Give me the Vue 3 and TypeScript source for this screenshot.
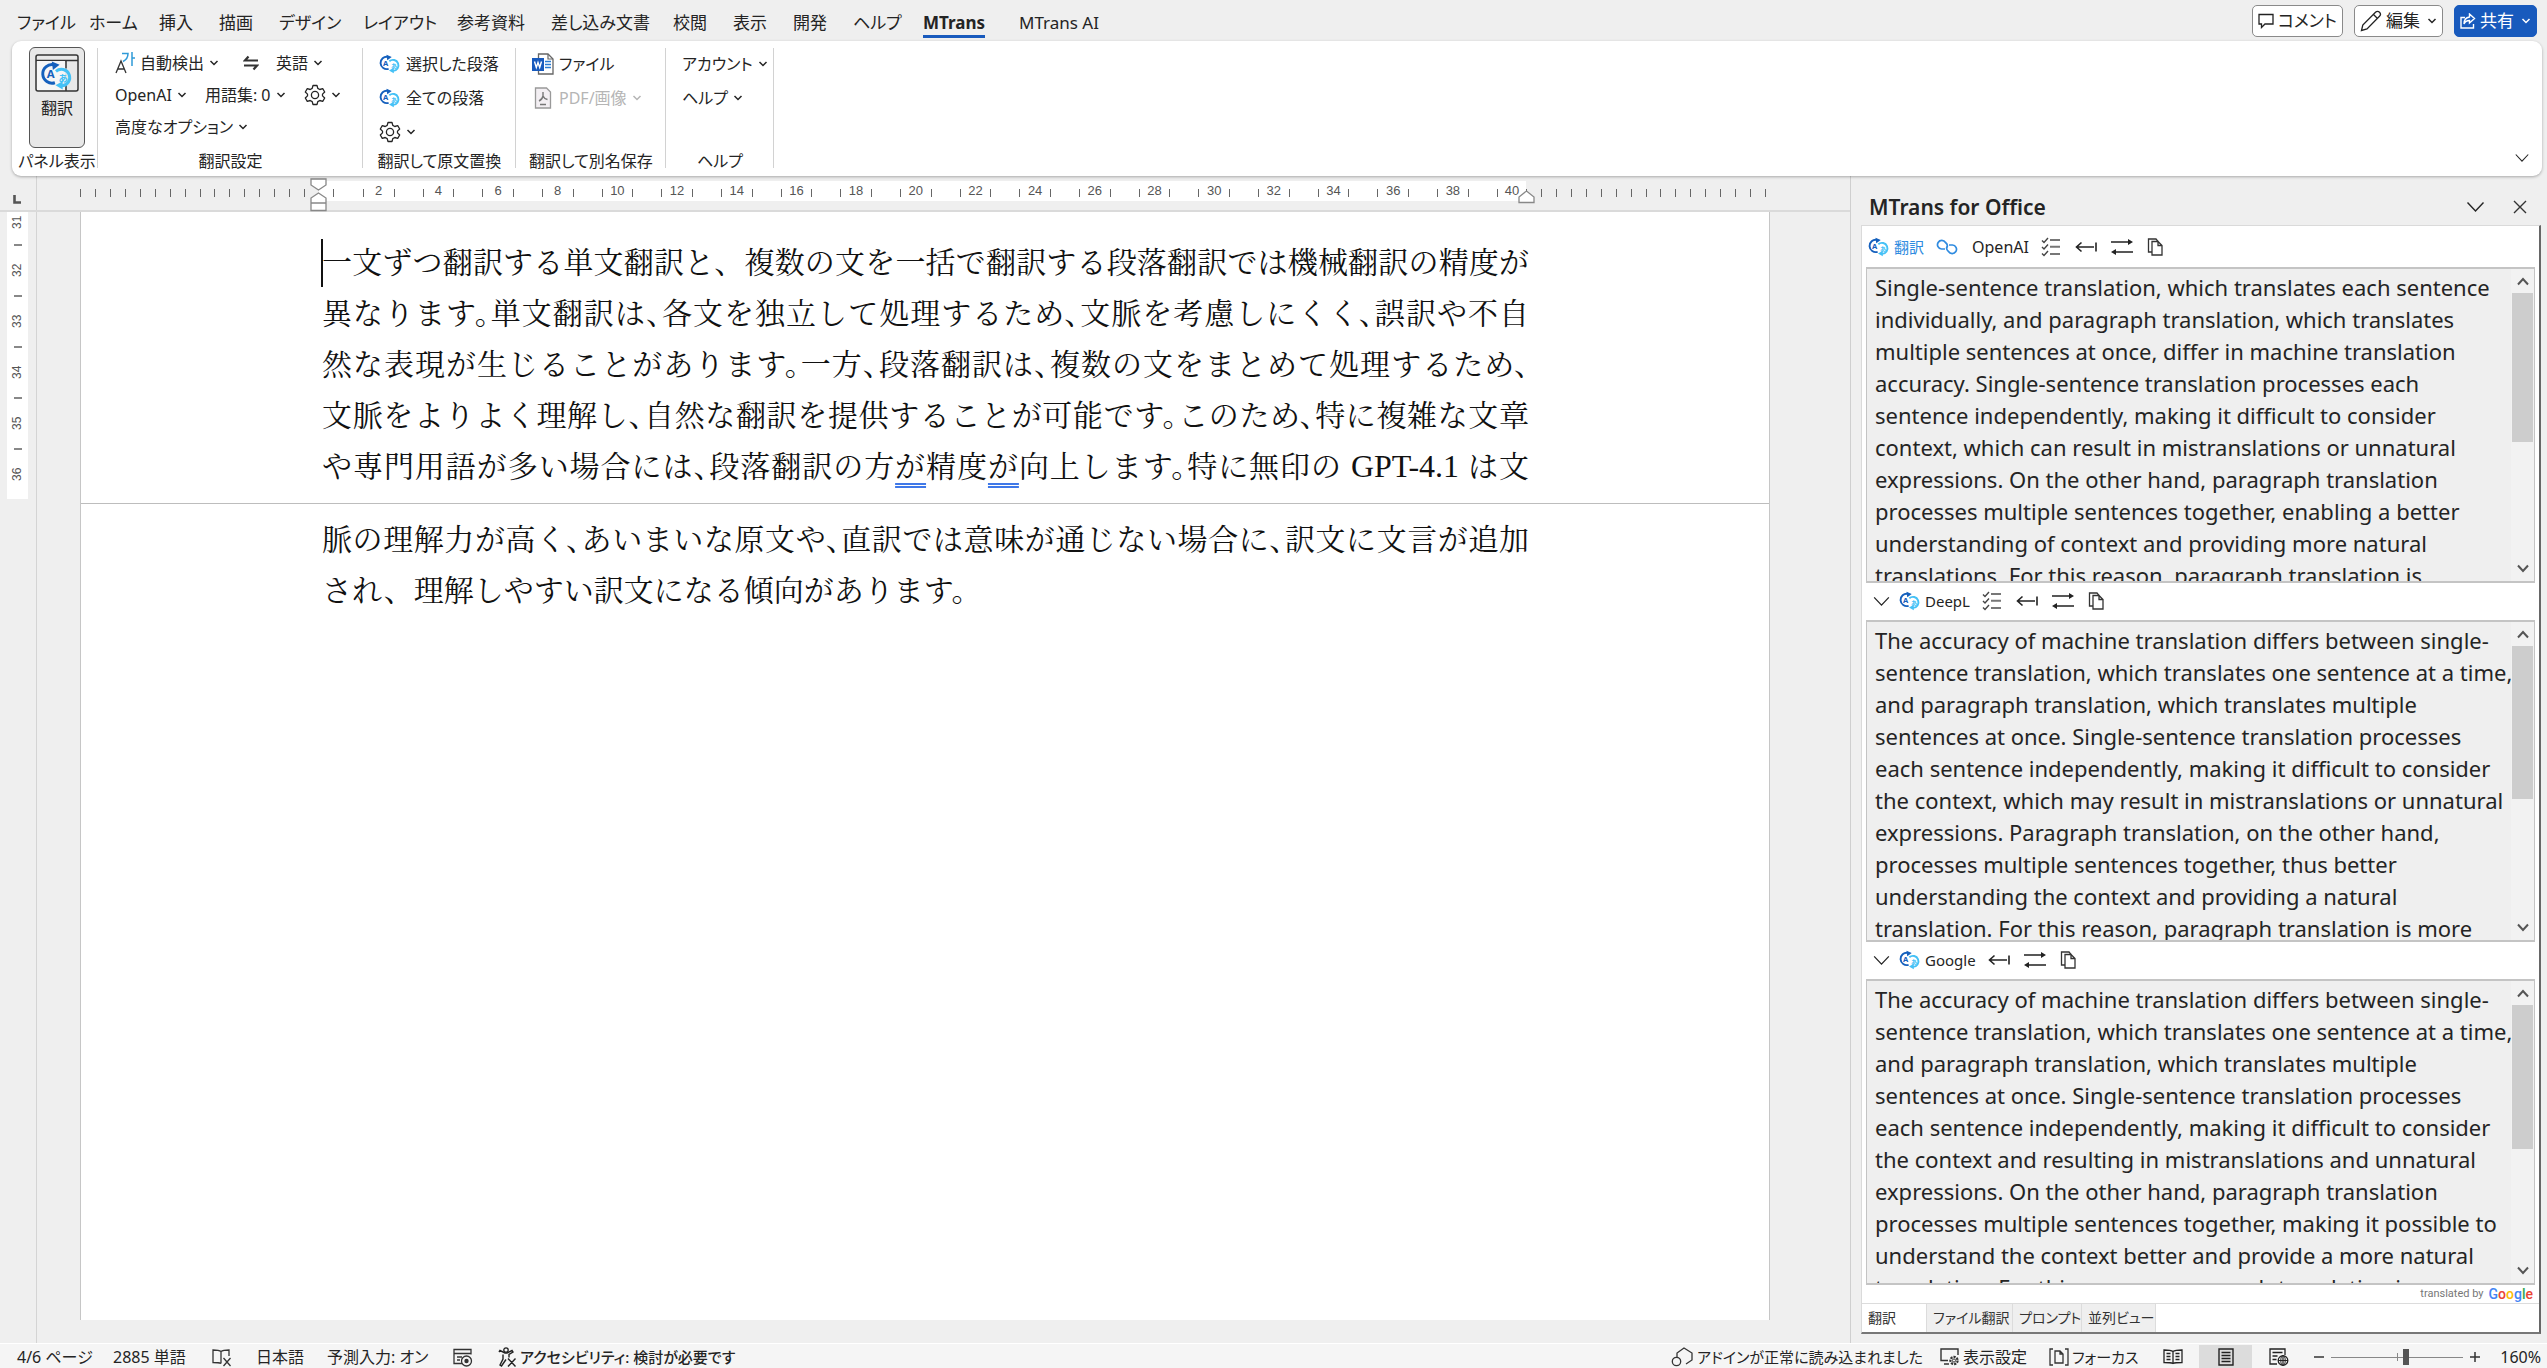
<script setup lang="ts">
import { ref } from 'vue'

interface Tab { label: string; width: number; active?: boolean }
interface Engine {
  name: string
  grow: number
  thumb: number
  first?: boolean
  checklist: boolean
  text: string
}

const tabs: Tab[] = [
  { label: 'ファイル', width: 72 },
  { label: 'ホーム', width: 70 },
  { label: '挿入', width: 60 },
  { label: '描画', width: 60 },
  { label: 'デザイン', width: 84 },
  { label: 'レイアウト', width: 94 },
  { label: '参考資料', width: 94 },
  { label: '差し込み文書', width: 122 },
  { label: '校閲', width: 60 },
  { label: '表示', width: 60 },
  { label: '開発', width: 60 },
  { label: 'ヘルプ', width: 70 },
  { label: 'MTrans', width: 96, active: true },
  { label: 'MTrans AI', width: 96 },
]

const rulerNumbers = Array.from({ length: 20 }, (_, i) => (i + 1) * 2)
const verticalNumbers = [31, 32, 33, 34, 35, 36]

const engines: Engine[] = [
  {
    name: 'OpenAI',
    grow: 316,
    thumb: 149,
    first: true,
    checklist: true,
    text: `Single-sentence translation, which translates each sentence
individually, and paragraph translation, which translates
multiple sentences at once, differ in machine translation
accuracy. Single-sentence translation processes each
sentence independently, making it difficult to consider
context, which can result in mistranslations or unnatural
expressions. On the other hand, paragraph translation
processes multiple sentences together, enabling a better
understanding of context and providing more natural
translations. For this reason, paragraph translation is`,
  },
  {
    name: 'DeepL',
    grow: 322,
    thumb: 153,
    checklist: true,
    text: `The accuracy of machine translation differs between single-
sentence translation, which translates one sentence at a time,
and paragraph translation, which translates multiple
sentences at once. Single-sentence translation processes
each sentence independently, making it difficult to consider
the context, which may result in mistranslations or unnatural
expressions. Paragraph translation, on the other hand,
processes multiple sentences together, thus better
understanding the context and providing a natural
translation. For this reason, paragraph translation is more`,
  },
  {
    name: 'Google',
    grow: 306,
    thumb: 144,
    checklist: false,
    text: `The accuracy of machine translation differs between single-
sentence translation, which translates one sentence at a time,
and paragraph translation, which translates multiple
sentences at once. Single-sentence translation processes
each sentence independently, making it difficult to consider
the context and resulting in mistranslations and unnatural
expressions. On the other hand, paragraph translation
processes multiple sentences together, making it possible to
understand the context better and provide a more natural
translation. For this reason, paragraph translation is`,
  },
]

const paneTabs: Tab[] = [
  { label: '翻訳', width: 65, active: true },
  { label: 'ファイル翻訳', width: 86 },
  { label: 'プロンプト', width: 69 },
  { label: '並列ビュー', width: 74 },
]

const googleLetters = [
  { ch: 'G', color: '#4285f4' },
  { ch: 'o', color: '#ea4335' },
  { ch: 'o', color: '#fbbc05' },
  { ch: 'g', color: '#4285f4' },
  { ch: 'l', color: '#34a853' },
  { ch: 'e', color: '#ea4335' },
]

const zoom = ref(57)
</script>

<template>
  <div class="word">
    <svg class="defs" aria-hidden="true">
      <symbol id="logo" viewBox="0 0 32 28">
        <path d="M13 3.6A9 9 0 1 0 14 21" fill="none" stroke="#1560bd" stroke-width="2.8" />
        <path d="M11 0.5l7.5 3.2L12 8.6z" fill="#1560bd" />
        <path d="M15 10a8 8 0 1 1 5.5 14" fill="none" stroke="#45c1f6" stroke-width="2.8" />
        <path d="M21.5 19.5v8l-7-4z" fill="#45c1f6" />
        <text x="9.8" y="16.5" font-size="11" font-weight="700" text-anchor="middle" fill="#1560bd">A</text>
        <text x="22" y="20" font-size="9" font-weight="700" text-anchor="middle" fill="#45c1f6">あ</text>
      </symbol>
      <symbol id="chev" viewBox="0 0 10 6">
        <path d="M1.5 1l3.5 3.5L8.5 1" fill="none" stroke="currentColor" stroke-width="1.5" />
      </symbol>
      <symbol id="bigchev" viewBox="0 0 18 12">
        <path d="M1 1.5l8 8.5 8-8.5" fill="none" stroke="currentColor" stroke-width="1.4" />
      </symbol>
      <symbol id="gear" viewBox="0 0 22 22">
        <path d="M9 1.5h4l.8 2.9 2 1.1 2.9-.8 2 3.3-2.2 2.1v1.8l2.2 2.1-2 3.3-2.9-.8-2 1.1-.8 2.9H9l-.8-2.9-2-1.1-2.9.8-2-3.3 2.2-2.1v-1.8L1.3 8l2-3.3 2.9.8 2-1.1z" fill="none" stroke="currentColor" stroke-width="1.3" stroke-linejoin="round" />
        <circle cx="11" cy="11" r="3.6" fill="none" stroke="currentColor" stroke-width="1.3" />
      </symbol>
      <symbol id="checklist" viewBox="0 0 20 20">
        <path d="M1 3.5l2 2L7 1M1 10l2 2 4-4.5M1 16.5l2 2L7 14" fill="none" stroke="#444" stroke-width="1.4" />
        <path d="M9 3h10M9 9.8h10M9 17h10" stroke="#777" stroke-width="2" />
      </symbol>
      <symbol id="insert" viewBox="0 0 22 16">
        <path d="M1.5 8H19M6.5 3.5L1.5 8l5 4.5M21 3.5v9" fill="none" stroke="#222" stroke-width="1.6" />
      </symbol>
      <symbol id="exchange" viewBox="0 0 22 18">
        <path d="M0 4h18M4 14h18" stroke="#222" stroke-width="1.6" />
        <path d="M17 1l5 3-5 3zM5 11l-5 3 5 3z" fill="#222" />
      </symbol>
      <symbol id="copy" viewBox="0 0 16 18">
        <path d="M5 3.5h6l4 4V17H5zM11 3.5v4h4" fill="none" stroke="#333" stroke-width="1.3" />
        <path d="M5 14H1.5V1H9l2 2.5" fill="none" stroke="#333" stroke-width="1.3" />
      </symbol>
      <symbol id="link" viewBox="0 0 22 16">
        <path d="M9 10H5.500A4.300 4.300 0 1 1 9.500 3.500c1.600 1.200 2.300 3 1.500 5" fill="none" stroke="#2f8be0" stroke-width="1.7" />
        <path d="M13 6h3.500A4.300 4.300 0 1 1 12.500 12.500c-1.600-1.200-2.300-3-1.500-5" fill="none" stroke="#2f8be0" stroke-width="1.7" />
      </symbol>
    </svg>

    <header class="tabbar">
      <nav class="tabs" aria-label="リボン">
        <button v-for="t in tabs" :key="t.label" class="tab" :class="{ active: t.active }" :style="{ width: t.width + 'px' }">
          <span>{{ t.label }}</span>
        </button>
      </nav>
      <div class="actions">
        <button class="action">
          <svg width="16" height="16" viewBox="0 0 16 16"><path d="M1 1.5h14v9.5H7L3.5 14.5V11H1z" fill="none" stroke="#222" stroke-width="1.3" /></svg>
          コメント
        </button>
        <button class="action">
          <svg width="22" height="22" viewBox="0 0 22 22"><path d="M1.5 20.5l1.3-5.5L15.5 2.3a2.5 2.5 0 0 1 4 4L7 19zM13.5 4.5l4 4" fill="none" stroke="#222" stroke-width="1.3" /></svg>
          編集
          <svg class="chev"><use href="#chev" /></svg>
        </button>
        <button class="action share">
          <svg width="16" height="16" viewBox="0 0 16 16"><path d="M5 4.5H1v10.5h12.5v-4M9.5 1l5 4.5-5 4.5V7.5C7 7.5 5 8.5 4 11c0-4 2-6.5 5.5-7z" fill="none" stroke="#fff" stroke-width="1.4" /></svg>
          共有
          <svg class="chev"><use href="#chev" /></svg>
        </button>
      </div>
    </header>

    <section class="ribbon" aria-label="MTrans">
      <div class="group panel-group">
        <div class="rows">
          <button class="panel-button">
            <svg width="44" height="38" viewBox="0 0 44 38">
              <rect x="1" y="1" width="42" height="36" rx="2" fill="none" stroke="#333" stroke-width="1.5" />
              <path d="M1 6.5h42M31 6.5v8M31 31v6" stroke="#333" stroke-width="1.5" />
              <rect x="2" y="7" width="28" height="29" fill="#f6f6f6" />
              <use href="#logo" x="5" y="7" width="34" height="29" />
            </svg>
            翻訳
          </button>
        </div>
        <h2>パネル表示</h2>
      </div>
      <div class="group settings-group">
        <div class="rows">
          <div class="row">
            <button class="cmd source">
              <svg width="20" height="22" viewBox="0 0 20 22"><path d="M1 21L6 9l5 12M3 17h6" fill="none" stroke="#333" stroke-width="1.3" /><path d="M7 1.5h6c0 4-2 6.5-5 8M17 0v14M17 6h3" fill="none" stroke="#2f9ad8" stroke-width="1.5" /></svg>
              <span>自動検出</span> <svg class="chev"><use href="#chev" /></svg>
            </button>
            <button class="cmd swap" aria-label="入れ替え">
              <svg width="16" height="16" viewBox="0 0 16 16"><path d="M5.5 1.5L2 5.5h13M10.5 14.5L14 10.5H1" fill="none" stroke="#333" stroke-width="2.2" /></svg>
            </button>
            <button class="cmd">英語 <svg class="chev"><use href="#chev" /></svg></button>
          </div>
          <div class="row wide">
            <button class="cmd">OpenAI <svg class="chev"><use href="#chev" /></svg></button>
            <button class="cmd">用語集: 0 <svg class="chev"><use href="#chev" /></svg></button>
            <button class="cmd" aria-label="設定"><svg width="22" height="22"><use href="#gear" /></svg> <svg class="chev"><use href="#chev" /></svg></button>
          </div>
          <div class="row">
            <button class="cmd">高度なオプション <svg class="chev"><use href="#chev" /></svg></button>
          </div>
        </div>
        <h2>翻訳設定</h2>
      </div>
      <div class="group replace-group tall">
        <div class="rows">
          <div class="row"><button class="cmd"><svg class="logo"><use href="#logo" /></svg>選択した段落</button></div>
          <div class="row"><button class="cmd"><svg class="logo"><use href="#logo" /></svg>全ての段落</button></div>
          <div class="row"><button class="cmd" aria-label="設定"><svg width="22" height="22"><use href="#gear" /></svg> <svg class="chev"><use href="#chev" /></svg></button></div>
        </div>
        <h2>翻訳して原文置換</h2>
      </div>
      <div class="group save-group tall">
        <div class="rows">
          <div class="row">
            <button class="cmd">
              <svg width="22" height="22" viewBox="0 0 22 22"><path d="M6.5 1h9.5l5 5v15H6.5z" fill="#fff" stroke="#666" stroke-width="1.3" /><path d="M16 1v5h5" fill="none" stroke="#666" stroke-width="1.2" /><path d="M13 8.5h6M13 11.5h6M13 14.5h6" stroke="#2b7cd3" stroke-width="1.4" /><rect y="5" width="12" height="13" fill="#185abd" /><path d="M2.5 8.5l1.8 6L6 9.5l1.7 5 1.8-6" fill="none" stroke="#fff" stroke-width="1.4" /></svg>
              ファイル
            </button>
          </div>
          <div class="row">
            <button class="cmd" disabled>
              <svg width="22" height="22" viewBox="0 0 22 22"><path d="M3.5 1h11l4 4v16h-15z" fill="#f3eff3" stroke="#999" stroke-width="1.3" /><path d="M11 5v4c-.5 2.5-2 4-4 5M11 9c.8 2 2 3 4.5 3.5M8 17.5h6" fill="none" stroke="#777" stroke-width="1.4" /></svg>
              PDF/画像 <svg class="chev"><use href="#chev" /></svg>
            </button>
          </div>
        </div>
        <h2>翻訳して別名保存</h2>
      </div>
      <div class="group help-group tall">
        <div class="rows">
          <div class="row"><button class="cmd">アカウント <svg class="chev"><use href="#chev" /></svg></button></div>
          <div class="row"><button class="cmd">ヘルプ <svg class="chev"><use href="#chev" /></svg></button></div>
        </div>
        <h2>ヘルプ</h2>
      </div>
      <button class="collapse" aria-label="リボンを折りたたむ"><svg width="14" height="10"><use href="#bigchev" /></svg></button>
    </section>

    <main class="workspace">
      <section class="editor">
        <div class="ruler">
          <div class="corner"><svg width="8" height="9" viewBox="0 0 8 9"><path d="M1.5 0v7.5H8" fill="none" stroke="#555" stroke-width="2.6" /></svg></div>
          <div class="scale">
            <div class="ticks before"><i v-for="n in 16" :key="n" /></div>
            <div class="numbers">
              <span class="cell half"><i /></span>
              <span v-for="n in rulerNumbers" :key="n" class="cell" :class="{ last: n === 40 }"><i />{{ n }}<i v-if="n !== 40" /></span>
              <svg class="indent left" width="17" height="34" viewBox="0 0 17 34"><path d="M1 1h15v6l-7.5 5L1 7zM1 32.5h15V20l-7.5-5L1 20zM1 25h15" fill="#fff" stroke="#888" stroke-width="1.3" /></svg>
              <svg class="indent right" width="17" height="14" viewBox="0 0 17 14"><path d="M1 12.5h15V7L8.5 1 1 7z" fill="#fff" stroke="#888" stroke-width="1.3" /></svg>
            </div>
            <div class="ticks after"><i v-for="n in 17" :key="n" /></div>
          </div>
        </div>
        <div class="canvas">
          <div class="vruler">
            <div class="vscale">
              <template v-for="n in verticalNumbers" :key="n">
                <span class="vnum">{{ n }}</span>
                <i v-if="n !== 36" />
              </template>
            </div>
          </div>
          <article class="page">
            <div class="sheet upper">
              <p>
                <span class="caret">一文ずつ翻訳する単文翻訳と、複数の文を一括で翻訳する段落翻訳では機械翻訳の精度が</span>
                <span class="tight">異なります。単文翻訳は、各文を独立して処理するため、文脈を考慮しにくく、誤訳や不自</span>
                <span class="tight">然な表現が生じることがあります。一方、段落翻訳は、複数の文をまとめて処理するため、</span>
                <span class="tight">文脈をよりよく理解し、自然な翻訳を提供することが可能です。このため、特に複雑な文章</span>
                <span class="tight">や専門用語が多い場合には、段落翻訳の方<u>が</u>精度<u>が</u>向上します。特に無印の<b class="latin"> GPT-4.1 </b>は文</span>
              </p>
            </div>
            <div class="sheet lower">
              <p>
                <span class="tight">脈の理解力が高く、あいまいな原文や、直訳では意味が通じない場合に、訳文に文言が追加</span>
                <span class="end">され、理解しやすい訳文になる傾向があります。</span>
              </p>
            </div>
          </article>
        </div>
      </section>

      <aside class="pane">
        <div class="pane-title">
          <h1>MTrans for Office</h1>
          <button aria-label="メニュー"><svg width="19" height="12"><use href="#bigchev" /></svg></button>
          <button aria-label="閉じる"><svg width="14" height="14" viewBox="0 0 14 14"><path d="M1 1l12 12M13 1L1 13" stroke="#333" stroke-width="1.4" /></svg></button>
        </div>
        <div class="pane-body">
          <template v-for="e in engines" :key="e.name">
            <div class="tools" :class="{ primary: e.first }">
              <button v-if="!e.first" class="fold" aria-label="折りたたむ"><svg width="17" height="11"><use href="#bigchev" /></svg></button>
              <button class="run">
                <svg class="logo"><use href="#logo" /></svg>
                <span>{{ e.first ? '翻訳' : e.name }}</span>
              </button>
              <button v-if="e.first" class="chain" aria-label="リンク"><svg width="22" height="16"><use href="#link" /></svg></button>
              <span v-if="e.first" class="engine">{{ e.name }}</span>
              <div class="icons">
                <button v-if="e.checklist" aria-label="チェック"><svg width="20" height="20"><use href="#checklist" /></svg></button>
                <button aria-label="挿入"><svg width="22" height="16"><use href="#insert" /></svg></button>
                <button aria-label="置換"><svg width="22" height="18"><use href="#exchange" /></svg></button>
                <button aria-label="コピー"><svg width="16" height="18"><use href="#copy" /></svg></button>
              </div>
            </div>
            <div class="result" :style="{ flexGrow: e.grow }">
              <textarea readonly :aria-label="e.name" :value="e.text" />
              <div class="scrollbar">
                <svg width="12" height="9" viewBox="0 0 12 9"><path d="M1 7.5l5-5.5 5 5.5" fill="none" stroke="#555" stroke-width="2" /></svg>
                <div class="thumb" :style="{ height: e.thumb + 'px' }" />
                <svg class="down" width="12" height="9" viewBox="0 0 12 9"><path d="M1 1.5L6 7l5-5.5" fill="none" stroke="#555" stroke-width="2" /></svg>
              </div>
            </div>
          </template>
          <div class="credit">
            <span>translated by</span>
            <span class="google"><b v-for="(l, i) in googleLetters" :key="i" :style="{ color: l.color }">{{ l.ch }}</b></span>
          </div>
          <div class="pane-tabs">
            <button v-for="t in paneTabs" :key="t.label" :class="{ active: t.active }" :style="{ width: t.width + 'px' }">{{ t.label }}</button>
          </div>
        </div>
      </aside>
    </main>

    <footer class="status">
      <span class="slot pages">4/6 ページ</span>
      <span class="slot words">2885 単語</span>
      <svg width="20" height="19" viewBox="0 0 20 19"><path d="M9 15.5c-2-1-5-1-8-1V2c3 0 6 0 8 1.5C11 2 14 2 17 2v6M9 3.5v12M11.5 10l7 8M18.5 10l-7 8" fill="none" stroke="#333" stroke-width="1.3" /></svg>
      <span class="slot lang">日本語</span>
      <span class="slot predict">予測入力: オン</span>
      <svg width="20" height="19" viewBox="0 0 20 19"><path d="M9 15.5H1V1.5h17v5M1 5.5h17M4 9h5M4 12h3" fill="none" stroke="#333" stroke-width="1.3" /><circle cx="13.5" cy="13" r="5" fill="none" stroke="#333" stroke-width="1.3" /><circle cx="13.5" cy="13" r="2.2" fill="#333" /></svg>
      <span class="slot access">
        <svg width="20" height="20" viewBox="0 0 20 20"><circle cx="9" cy="3" r="2.2" fill="none" stroke="#222" stroke-width="1.3" /><path d="M2 5l1-1.5 5 2.5h2l5-2.5L16 5l-4 2.5v3M6 7.5V12L3 18l1.5 1L9 12.5M11 11.5l7.5 8M18.5 11.5l-7.5 8" fill="none" stroke="#222" stroke-width="1.4" /></svg>
        アクセシビリティ: 検討が必要です
      </span>
      <span class="slot addin">
        <svg width="23" height="20" viewBox="0 0 23 20"><path d="M6 10V6l7-5 8 5v7l-6 4" fill="none" stroke="#333" stroke-width="1.3" /><circle cx="5.5" cy="14.5" r="4.2" fill="none" stroke="#333" stroke-width="1.3" /></svg>
        アドインが正常に読み込まれました
      </span>
      <span class="slot display">
        <svg width="20" height="18" viewBox="0 0 20 18"><path d="M8 12.5H1V1h17v6M4 16h5" fill="none" stroke="#333" stroke-width="1.4" /><circle cx="14" cy="12.5" r="3.6" fill="none" stroke="#333" stroke-width="2.2" stroke-dasharray="2.2 1" /><circle cx="14" cy="12.5" r="1.6" fill="none" stroke="#333" /></svg>
        表示設定
      </span>
      <span class="slot focus">
        <svg width="20" height="18" viewBox="0 0 20 18"><path d="M4 1H1v16h3M16 1h3v16h-3M6 3h5l3 3v9H6zM11 3v3h3" fill="none" stroke="#333" stroke-width="1.3" /></svg>
        フォーカス
      </span>
      <button class="view" aria-label="閲覧モード"><svg width="20" height="16" viewBox="0 0 20 16"><path d="M10 14.5c-2-1-5-1-9-1V1c4 0 7 0 9 1.5C12 1 15 1 19 1v12.5c-4 0-7 0-9 1zM10 2.5v12M3.5 4.5h4M3.5 7.5h4M3.5 10.5h4M12.5 4.5h4M12.5 7.5h4M12.5 10.5h4" fill="none" stroke="#222" stroke-width="1.3" /></svg></button>
      <button class="view current" aria-label="印刷レイアウト"><svg width="16" height="18" viewBox="0 0 16 18"><path d="M1 1h14v16H1zM3.5 4.5h9M3.5 7.5h9M3.5 10.5h9M3.5 13.5h9" fill="none" stroke="#222" stroke-width="1.4" /></svg></button>
      <button class="view" aria-label="Web レイアウト"><svg width="20" height="18" viewBox="0 0 20 18"><path d="M8 16H1V1h15v6M3.5 4.5h10M3.5 8h5M3.5 11.5h4" fill="none" stroke="#222" stroke-width="1.3" /><circle cx="14" cy="12.5" r="4.8" fill="none" stroke="#222" stroke-width="1.3" /><path d="M9 12.5h10M14 8v9" stroke="#222" stroke-width="1.2" /><ellipse cx="14" cy="12.5" rx="2.2" ry="4.8" fill="none" stroke="#222" /></svg></button>
      <button class="step" aria-label="縮小"><svg width="12" height="12" viewBox="0 0 12 12"><path d="M1 6h10" stroke="#333" stroke-width="1.5" /></svg></button>
      <input v-model="zoom" class="zoom" type="range" min="0" max="100" aria-label="ズーム" />
      <button class="step" aria-label="拡大"><svg width="12" height="12" viewBox="0 0 12 12"><path d="M1 6h10M6 1v10" stroke="#333" stroke-width="1.5" /></svg></button>
      <span class="percent">160%</span>
    </footer>
  </div>
</template>

<style>
body {
  margin: 0;
  overflow: hidden;
}
</style>

<style scoped>
.word {
  display: flex;
  flex-direction: column;
  height: 100vh;
  background: #efefef;
  color: #242424;
  font-family: "Noto Sans", "Noto Sans CJK JP", sans-serif;
  font-feature-settings: "palt";
  font-size: 16px;
  line-height: 24px;
  white-space: nowrap;
}
.word * { box-sizing: border-box; }
.defs { display: none; }
svg { flex: none; display: block; }
button {
  display: flex;
  align-items: center;
  padding: 0;
  border: 0;
  background: none;
  color: inherit;
  font: inherit;
  font-feature-settings: inherit;
  white-space: nowrap;
}
h1, h2, p { margin: 0; font-weight: 400; }
.chev { width: 10px; height: 6px; }
.logo { width: 22px; height: 20px; }

/* Tab bar */
.tabbar {
  display: flex;
  justify-content: space-between;
  height: 41px;
  flex: none;
  padding: 0 10px 0 17px;
}
.tabs { display: flex; align-items: flex-start; padding-top: 11px; font-size: 17px; }
.tab span { line-height: 24px; border-bottom: 3px solid transparent; }
.tab.active { font-weight: 700; }
.tab.active span { border-color: #185abd; }
.actions { display: flex; align-items: flex-start; gap: 11px; padding-top: 5px; font-size: 17px; }
.action {
  height: 32px;
  gap: 4px;
  padding: 0 5px;
  border: 1px solid #8a8a8a;
  border-radius: 5px;
  background: #fff;
}
.action .chev { margin-left: 3px; }
.share { background: #185abd; border-color: #185abd; color: #fff; }

/* Ribbon */
.ribbon {
  display: flex;
  flex: none;
  margin: 0 5px 0 12px;
  padding: 6px 0 1px;
  background: #fff;
  border-radius: 9px;
  box-shadow: 0 1px 3px rgba(0, 0, 0, 0.3);
  z-index: 2;
}
.group { display: flex; flex-direction: column; position: relative; }
.group::after { content: ""; position: absolute; right: 0; top: 1px; height: 120px; width: 1px; background: #d2d2d2; }
.rows { height: 102px; }
.row { display: flex; height: 32px; }
.tall .row { height: 34px; }
.wide { gap: 18px; }
.group h2 { font-size: 16px; line-height: 24px; text-align: center; padding-bottom: 2px; }
.panel-group { width: 86px; padding-left: 4px; }
.settings-group { width: 265px; }
.replace-group { width: 153px; }
.save-group { width: 150px; }
.help-group { width: 108px; }
.settings-group .rows { padding-left: 17px; }
.tall .rows { padding-left: 16px; }
.cmd { gap: 5px; }
.source { margin-right: 24px; }
.swap { margin-right: 17px; }
.cmd:disabled { color: #b5b5b5; }
.panel-button {
  flex-direction: column;
  width: 56px;
  height: 101px;
  margin: 0 auto;
  padding-top: 6px;
  border: 1px solid #555;
  border-radius: 6px;
  background: #e8e8e8;
  gap: 4px;
}
.collapse { margin: auto 13px 12px auto; }

/* Workspace */
.workspace { display: flex; flex: 1; min-height: 0; }
.editor { display: flex; flex-direction: column; flex: 1; min-width: 0; }
.ruler { display: flex; height: 36px; flex: none; border-bottom: 2px solid #dadada; }
.corner { width: 37px; padding: 19px 0 0 13px; border-right: 1px solid #d4d4d4; }
.scale { display: flex; flex: 1; padding: 5px 81px 9px 43px; font-size: 13px; color: #555; font-family: "Liberation Sans", sans-serif; }
.ticks { display: grid; align-items: center; padding-top: 4px; }
.before { width: 239px; grid-template-columns: repeat(16, 1fr); }
.after { width: 243px; grid-template-columns: repeat(16, 15fr) 4fr; }
.scale i { width: 1px; height: 8px; background: #666; }
.numbers { position: relative; display: grid; flex: 1; grid-template-columns: 20fr repeat(19, 40fr) 29fr; background: #fff; }
.cell { display: flex; align-items: center; justify-content: space-between; padding: 0 14px; line-height: 20px; }
.cell i { margin-top: 4px; }
.half { justify-content: center; padding: 0; }
.last { justify-content: flex-start; gap: 7px; padding-right: 0; }
.indent { position: absolute; }
.indent.left { left: -9px; top: -3px; }
.indent.right { right: -9px; top: 9px; }

.canvas { display: flex; flex: 1; min-height: 0; }
.vruler { width: 37px; padding-left: 7px; border-right: 1px solid #d4d4d4; }
.vscale {
  display: flex;
  flex-direction: column;
  align-items: center;
  width: 21px;
  height: 287px;
  background: #fff;
  font: 12px/21px "Liberation Sans", sans-serif;
  color: #555;
  overflow: hidden;
}
.vnum { height: 25px; flex: none; writing-mode: vertical-rl; transform: rotate(180deg); text-align: center; }
.vnum:first-child { height: 20px; }
.vscale i { flex: none; width: 8px; height: 2px; margin: 12px 0; background: #888; }
.page {
  flex: 1;
  margin: 0 80px 23px 43px;
  background: #fff;
  border: 1px solid #c6c6c6;
  border-width: 0 1px;
  font-family: "Liberation Serif", "Noto Serif CJK JP", "Noto Sans CJK JP", serif;
  font-feature-settings: normal;
  font-size: 30px;
  font-weight: 300;
  line-height: 51px;
  color: #111;
}
.sheet { padding: 0 240px 0 241px; }
.upper { padding-top: 25px; padding-bottom: 11px; border-bottom: 1px solid #bdbdbd; }
.lower { padding-top: 10px; }
.sheet span { display: block; text-align: justify; text-align-last: justify; }
.sheet .tight { font-feature-settings: "halt"; }
.sheet .end { text-align-last: left; }
.latin { font-size: 32px; font-weight: 400; line-height: 32px; }
.caret { position: relative; }
.caret::before { content: ""; position: absolute; left: -1px; top: 2px; width: 2px; height: 48px; background: #111; }
.sheet u { text-decoration: underline double #3f78e8; text-decoration-thickness: 2px; text-underline-offset: 6px; }

/* Translation pane */
.pane { display: flex; flex-direction: column; width: 697px; padding: 0 6px 9px 10px; border-left: 1px solid #cfcfcf; }
.pane-title { display: flex; align-items: center; height: 49px; padding: 13px 14px 0 8px; flex: none; gap: 28px; }
.pane-title h1 { margin-right: auto; font-size: 21px; font-weight: 600; line-height: 30px; }
.pane-body {
  display: flex;
  flex-direction: column;
  flex: 1;
  min-height: 0;
  background: #fff;
  border: 1px solid #dadada;
  border-right: 2px solid #666;
  border-bottom: 2px solid #777;
}
.tools { display: flex; align-items: center; flex: none; height: 37px; padding-left: 11px; }
.tools.primary { height: 41px; padding-left: 6px; }
.fold { margin-right: 9px; }
.run { gap: 4px; font-size: 15px; }
.primary .run { color: #2f8be0; margin-right: 12px; }
.chain { margin-right: 14px; }
.icons { display: flex; gap: 14px; margin-left: 12px; }
.result {
  display: flex;
  flex-basis: 0;
  min-height: 0;
  margin: 0 4px;
  border: 2px solid #c4c4c4;
  border-width: 2px 1px;
  background: #efefef;
}
.result textarea {
  flex: 1;
  min-width: 0;
  padding: 2px 0 0 8px;
  border: 0;
  outline: 0;
  resize: none;
  overflow: hidden;
  background: none;
  color: #242424;
  font: 22px/32px "Noto Sans", sans-serif;
  white-space: pre;
}
.scrollbar { display: flex; flex-direction: column; align-items: center; width: 23px; padding: 8px 0; background: #f2f2f2; }
.thumb { width: 21px; margin-top: 7px; background: #cdcdcd; }
.down { margin-top: auto; }
.credit { display: flex; justify-content: flex-end; gap: 5px; flex: none; height: 18px; padding-right: 6px; line-height: 18px; font-size: 11px; color: #777; font-family: Roboto, sans-serif; }
.google { font-size: 14px; }
.google b { font-weight: 500; }
.pane-tabs { display: flex; flex: none; height: 29px; border-top: 1px solid #dcdcdc; color: #333; }
.pane-tabs button { padding-left: 6px; background: #efefef; border-right: 1px solid #dcdcdc; font-size: 14px; }
.pane-tabs .active { background: #fff; }

/* Status bar */
.status { display: flex; align-items: center; flex: none; height: 25px; padding: 2px 6px 0 17px; background: #f5f5f5; border-top: 1px solid #fff; }
.slot { display: flex; align-items: center; gap: 3px; }
.pages { width: 96px; }
.words { width: 99px; }
.lang { margin-left: 24px; width: 71px; }
.predict { width: 126px; }
.access { margin-left: 24px; font-size: 15px; font-weight: 500; }
.addin { margin-left: auto; width: 269px; font-size: 15px; }
.display { width: 109px; }
.focus { width: 97px; font-size: 15px; }
.view { justify-content: center; width: 53px; height: 24px; }
.current { background: #dcdcdc; }
.step { margin: 0 6px; }
.view + .step { margin-left: 8px; }
.zoom { width: 132px; height: 20px; margin: 0; appearance: none; background: linear-gradient(#888, #888) center / 100% 1px no-repeat, linear-gradient(#888, #888) center / 1px 8px no-repeat; }
.zoom::-webkit-slider-thumb { appearance: none; width: 6px; height: 16px; background: #555; }
.percent { width: 54px; text-align: right; }
</style>
